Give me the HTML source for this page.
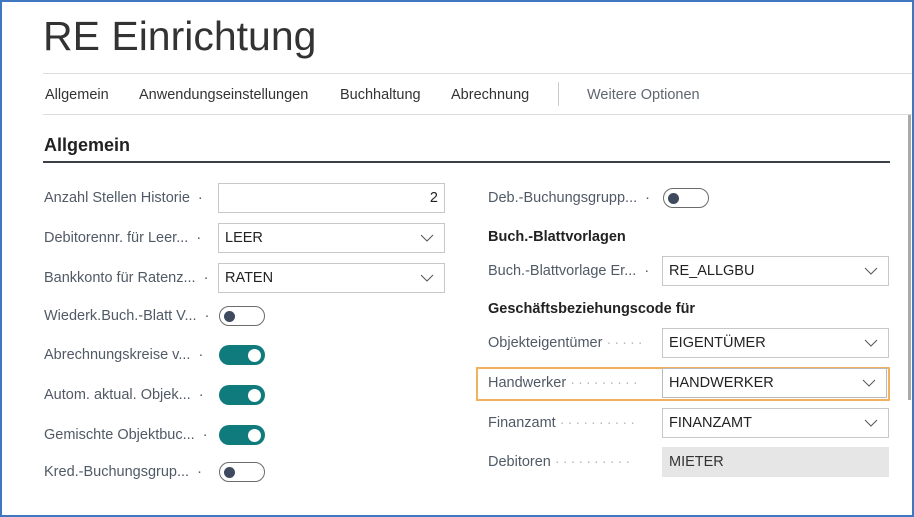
<!DOCTYPE html>
<html><head><meta charset="utf-8"><style>
*{margin:0;padding:0;box-sizing:border-box}
body{width:914px;height:517px;overflow:hidden;background:#fff;font-family:"Liberation Sans",sans-serif;position:relative}
.frame{position:absolute;left:0;top:0;width:914px;height:517px;border:2px solid #3f78c0;border-right-width:2px}
.a{position:absolute;white-space:nowrap}
.lbl{position:absolute;font-size:14.5px;color:#505a66;white-space:nowrap}
.inp{position:absolute;height:30px;border:1px solid #c8c8c8;background:#fff;font-size:14.5px;color:#222;padding-left:6px;line-height:28px}
.inp svg{position:absolute;right:10px;top:10px}
.tg{position:absolute;width:46px;height:20px;border-radius:10px}
.off{border:1.5px solid #6b6b6b;background:#fff}
.off::after{content:"";position:absolute;left:4px;top:3.5px;width:11px;height:11px;border-radius:50%;background:#3f4a5e}
.on{background:#0f7b7c}
.on::after{content:"";position:absolute;right:4px;top:3.5px;width:13px;height:13px;border-radius:50%;background:#fff}
.sec{position:absolute;font-size:14.5px;font-weight:bold;color:#222}
</style></head><body>
<div class="frame"></div>
<div class="a" style="left:43px;top:13px;font-size:41px;color:#333;font-weight:300">RE Einrichtung</div>
<div class="a" style="left:43px;top:73px;width:869px;height:1px;background:#dcdcdc"></div>
<div class="a" style="left:43px;top:114px;width:869px;height:1px;background:#dcdcdc"></div>
<div class="a" style="left:45px;top:87px;font-size:14.5px;color:#333">Allgemein</div>
<div class="a" style="left:139px;top:87px;font-size:14.5px;color:#333">Anwendungseinstellungen</div>
<div class="a" style="left:340px;top:87px;font-size:14.5px;color:#333">Buchhaltung</div>
<div class="a" style="left:451px;top:87px;font-size:14.5px;color:#333">Abrechnung</div>
<div class="a" style="left:558px;top:82px;width:1px;height:24px;background:#ccc"></div>
<div class="a" style="left:587px;top:87px;font-size:14.5px;color:#5f6670">Weitere Optionen</div>
<div class="a" style="left:908px;top:115px;width:3px;height:285px;background:#aaa"></div>
<div class="a" style="left:44px;top:135px;font-size:18px;font-weight:bold;color:#222">Allgemein</div>
<div class="a" style="left:43px;top:161px;width:847px;height:2px;background:#3a3f48"></div>

<div class="lbl" style="left:44px;top:190px">Anzahl Stellen Historie &nbsp;·</div>
<div class="inp" style="left:218px;top:183px;width:227px;text-align:right;padding-right:6px">2</div>
<div class="lbl" style="left:44px;top:230px">Debitorennr. für Leer... &nbsp;·</div>
<div class="inp" style="left:218px;top:223px;width:227px">LEER<svg width="14" height="8"><path d="M1 1l6 6 6-6" stroke="#555" fill="none"/></svg></div>
<div class="lbl" style="left:44px;top:270px">Bankkonto für Ratenz... &nbsp;·</div>
<div class="inp" style="left:218px;top:263px;width:227px">RATEN<svg width="14" height="8"><path d="M1 1l6 6 6-6" stroke="#555" fill="none"/></svg></div>
<div class="lbl" style="left:44px;top:308px">Wiederk.Buch.-Blatt V... &nbsp;·</div>
<div class="tg off" style="left:219px;top:306px"></div>
<div class="lbl" style="left:44px;top:347px">Abrechnungskreise v... &nbsp;·</div>
<div class="tg on" style="left:219px;top:345px"></div>
<div class="lbl" style="left:44px;top:387px">Autom. aktual. Objek... &nbsp;·</div>
<div class="tg on" style="left:219px;top:385px"></div>
<div class="lbl" style="left:44px;top:427px">Gemischte Objektbuc... &nbsp;·</div>
<div class="tg on" style="left:219px;top:425px"></div>
<div class="lbl" style="left:44px;top:464px">Kred.-Buchungsgrup... &nbsp;·</div>
<div class="tg off" style="left:219px;top:462px"></div>

<div class="lbl" style="left:488px;top:190px">Deb.-Buchungsgrupp... &nbsp;·</div>
<div class="tg off" style="left:663px;top:188px"></div>
<div class="sec" style="left:488px;top:229px">Buch.-Blattvorlagen</div>
<div class="lbl" style="left:488px;top:263px">Buch.-Blattvorlage Er... &nbsp;·</div>
<div class="inp" style="left:662px;top:256px;width:227px">RE_ALLGBU<svg width="14" height="8"><path d="M1 1l6 6 6-6" stroke="#555" fill="none"/></svg></div>
<div class="sec" style="left:488px;top:301px">Geschäftsbeziehungscode für</div>
<div class="lbl" style="left:488px;top:335px">Objekteigentümer <span style="color:#bbb;letter-spacing:3px">·····</span></div>
<div class="inp" style="left:662px;top:328px;width:227px">EIGENTÜMER<svg width="14" height="8"><path d="M1 1l6 6 6-6" stroke="#555" fill="none"/></svg></div>
<div class="a" style="left:476px;top:367px;width:414px;height:34px;border:2px solid #f0b25e"></div>
<div class="lbl" style="left:488px;top:375px">Handwerker <span style="color:#bbb;letter-spacing:3px">·········</span></div>
<div class="inp" style="left:662px;top:368px;width:225px;border-color:#bbb">HANDWERKER<svg width="14" height="8"><path d="M1 1l6 6 6-6" stroke="#555" fill="none"/></svg></div>
<div class="lbl" style="left:488px;top:415px">Finanzamt <span style="color:#bbb;letter-spacing:3px">··········</span></div>
<div class="inp" style="left:662px;top:408px;width:227px">FINANZAMT<svg width="14" height="8"><path d="M1 1l6 6 6-6" stroke="#555" fill="none"/></svg></div>
<div class="lbl" style="left:488px;top:454px">Debitoren <span style="color:#bbb;letter-spacing:3px">··········</span></div>
<div class="inp" style="left:662px;top:447px;width:227px;background:#e6e6e6;border-color:#e6e6e6;color:#333">MIETER</div>
</body></html>
